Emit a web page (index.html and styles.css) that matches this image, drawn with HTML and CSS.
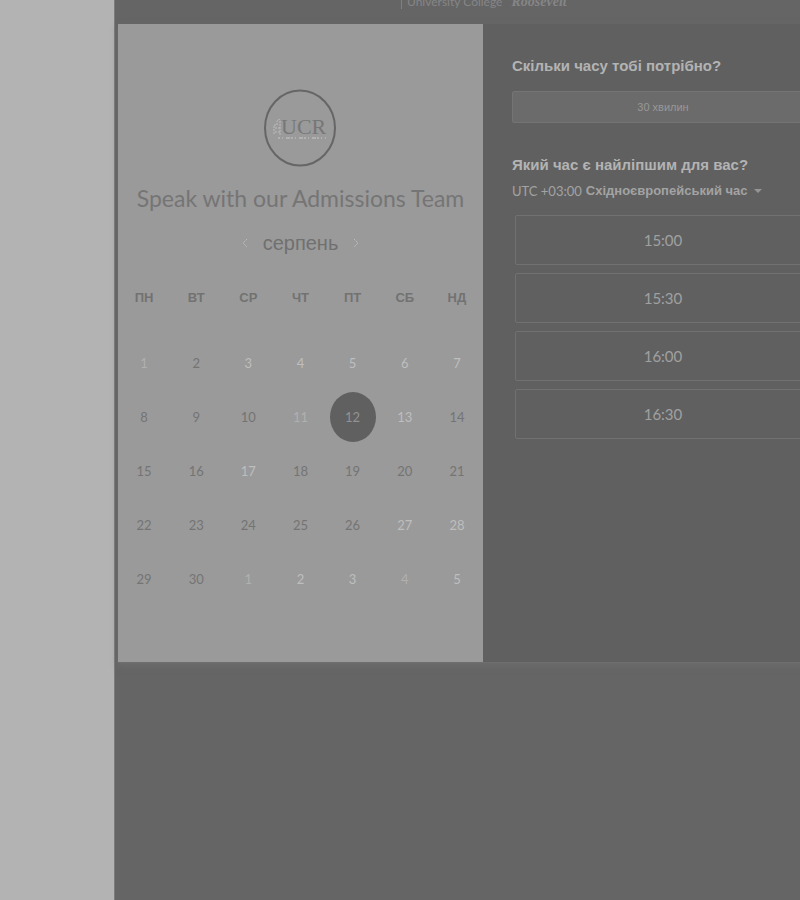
FILE: index.html
```
<!DOCTYPE html>
<html lang="uk">
<head>
<meta charset="utf-8">
<title>Speak with our Admissions Team</title>
<link rel="stylesheet" href="styles.css">
</head>
<body>
<div class="page">
  <main class="main">
    <header class="brand"><span class="brand-name">University College</span> <em>Roosevelt</em></header>
    <div class="scheduler">
      <section class="calendar">
        <svg class="logo" viewBox="0 0 74 80" role="img" aria-label="UCR">
          <ellipse cx="36" cy="40" rx="35" ry="37.5" fill="none" stroke="#666" stroke-width="2"/>
          <path d="M10 46V37h3v-4l2-2 1 2v14M11 40h5M11 44h6" fill="none" stroke="#bcbcbc" stroke-dasharray="2 1"/>
          <text class="logo-text" x="17" y="46" fill="#777">UCR</text>
          <path d="M14 50h48" stroke="#c8c8c8" stroke-dasharray="2 2 1 3 4 1"/>
        </svg>
        <h1 class="title">Speak with our Admissions Team</h1>
        <div class="month">
          <button class="arrow" type="button" aria-label="Попередній місяць"><svg viewBox="0 0 6 10"><path d="M5 1 1 5l4 4"/></svg></button>
          <h2 class="month-name">серпень</h2>
          <button class="arrow" type="button" aria-label="Наступний місяць"><svg viewBox="0 0 6 10"><path d="m1 1 4 4-4 4"/></svg></button>
        </div>
        <table class="days">
          <thead><tr><th>ПН</th><th>ВТ</th><th>СР</th><th>ЧТ</th><th>ПТ</th><th>СБ</th><th>НД</th></tr></thead>
          <tbody>
            <tr><td class="faint">1</td><td>2</td><td class="light">3</td><td class="light">4</td><td class="light">5</td><td class="light">6</td><td class="light">7</td></tr>
            <tr><td>8</td><td>9</td><td>10</td><td class="faint">11</td><td><button class="selected" type="button" aria-pressed="true">12</button></td><td class="light">13</td><td>14</td></tr>
            <tr><td>15</td><td>16</td><td class="light">17</td><td>18</td><td>19</td><td>20</td><td>21</td></tr>
            <tr><td>22</td><td>23</td><td>24</td><td>25</td><td>26</td><td class="light">27</td><td class="light">28</td></tr>
            <tr><td>29</td><td>30</td><td class="faint">1</td><td class="light">2</td><td class="light">3</td><td class="faint">4</td><td class="light">5</td></tr>
          </tbody>
        </table>
      </section>
      <section class="options">
        <h2 class="question">Скільки часу тобі потрібно?</h2>
        <button class="duration" type="button">30 хвилин</button>
        <h2 class="question">Який час є найліпшим для вас?</h2>
        <button class="zone" type="button"><span>UTC +03:00</span> <b>Східноєвропейський час</b><i class="caret"></i></button>
        <div class="slots">
          <button class="slot" type="button">15:00</button>
          <button class="slot" type="button">15:30</button>
          <button class="slot" type="button">16:00</button>
          <button class="slot" type="button">16:30</button>
        </div>
      </section>
    </div>
  </main>
</div>
</body>
</html>
```
FILE: styles.css
```
* { box-sizing: border-box; }
body {
  margin: 0;
  background: #b3b3b3;
  font-family: "Liberation Sans", sans-serif;
  overflow: hidden;
}
button { font: inherit; color: inherit; background: none; border: 0; padding: 0; }
h1, h2 { margin: 0; font-weight: 400; }
.page { min-height: 100vh; padding-left: 114px; display: flex; }
.main {
  flex: 1;
  min-width: 0;
  background: #656565;
  border-left: 1px solid #7c7c7c;
}
.brand {
  height: 24px;
  padding-left: 286px;
  color: #858585;
  font: 12px/4px Lato, sans-serif;
  white-space: nowrap;
}
.brand-name { border-left: 1px solid #808080; padding-left: 5px; margin-right: 6px; }
.brand em { font: italic bold 14px/4px "Liberation Serif", serif; }
.scheduler {
  display: grid;
  grid-template-columns: 365px 1fr;
  margin: 0 -30px 0 3px;
  border-bottom: 1px solid #6e6e6e;
  box-shadow: 0 3px 6px #6c6c6c;
}
.calendar {
  padding: 64px 0 56px;
  background: #9a9a9a;
  display: flex;
  flex-direction: column;
  align-items: center;
}
.logo { width: 74px; height: 80px; display: block; }
.logo-text { font: 22px "Liberation Serif", serif; }
.title {
  margin-top: 15px;
  color: #757575;
  font: 23px/30px Lato, sans-serif;
  white-space: nowrap;
}
.month { margin-top: 15px; display: flex; align-items: center; gap: 15px; }
.month-name { font-size: 20px; line-height: 30px; color: #707070; }
.arrow { width: 6px; height: 10px; }
.arrow svg { display: block; width: 6px; height: 10px; fill: none; stroke: #bdbdbd; stroke-dasharray: 2 1; }
.days {
  width: 100%;
  margin-top: 21px;
  table-layout: fixed;
  border-collapse: collapse;
  text-align: center;
  color: #747474;
  font: 13px/20px Lato, sans-serif;
}
.days th { height: 38px; padding: 0; font: bold 13px/20px "Liberation Sans", sans-serif; color: #727272; }
.days td { height: 54px; padding: 0; }
.days thead::after { content: ""; display: block; height: 19px; }
.days .light { color: #bebebe; }
.days .faint { color: #b0b0b0; }
.days .selected {
  display: block;
  width: 46px;
  height: 50px;
  margin: 0 auto;
  border-radius: 50%;
  background: #606060;
  color: #929292;
}
.options {
  padding: 30px 16px 30px 29px;
  background: #606060;
  color: #b3b3b3;
  display: flex;
  flex-direction: column;
  align-items: stretch;
}
.question { font: bold 15px/24px "Liberation Sans", sans-serif; white-space: nowrap; }
.duration {
  height: 32px;
  margin: 13px 0 30px;
  border: 1px solid #747474;
  border-radius: 2px;
  background: #6b6b6b;
  color: #989898;
  font: 11px/20px "Liberation Sans", sans-serif;
}
.zone {
  align-self: flex-start;
  display: flex;
  align-items: center;
  gap: 4px;
  margin-top: 4px;
  color: #a3a3a3;
  font: 13px/20px Lato, sans-serif;
  white-space: nowrap;
}
.zone b { font: bold 13px/20px "Liberation Sans", sans-serif; }
.caret { margin-left: 2px; border: 4px solid transparent; border-top-color: #959595; border-bottom: 0; }
.slots { display: grid; gap: 8px; margin: 14px 3px 0; }
.slot {
  height: 50px;
  border: 1px solid #717171;
  border-radius: 2px;
  color: #a0a0a0;
  font: 15px/24px Lato, sans-serif;
}
```
